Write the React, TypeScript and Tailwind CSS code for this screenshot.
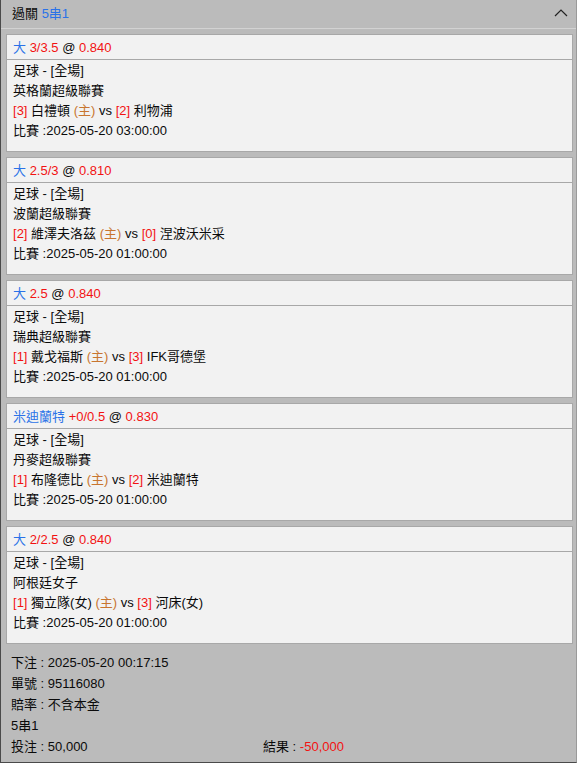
import React from "react";

type Bet = {
  pick: string;
  line: string;
  odds: string;
  league: string;
  homeRank: string;
  home: string;
  awayRank: string;
  away: string;
  time: string;
};

const bets: Bet[] = [
  { pick: "大", line: "3/3.5", odds: "0.840", league: "英格蘭超級聯賽", homeRank: "3", home: "白禮頓", awayRank: "2", away: "利物浦", time: "2025-05-20 03:00:00" },
  { pick: "大", line: "2.5/3", odds: "0.810", league: "波蘭超級聯賽", homeRank: "2", home: "維澤夫洛茲", awayRank: "0", away: "涅波沃米采", time: "2025-05-20 01:00:00" },
  { pick: "大", line: "2.5", odds: "0.840", league: "瑞典超級聯賽", homeRank: "1", home: "戴戈福斯", awayRank: "3", away: "IFK哥德堡", time: "2025-05-20 01:00:00" },
  { pick: "米迪蘭特", line: "+0/0.5", odds: "0.830", league: "丹麥超級聯賽", homeRank: "1", home: "布隆德比", awayRank: "2", away: "米迪蘭特", time: "2025-05-20 01:00:00" },
  { pick: "大", line: "2/2.5", odds: "0.840", league: "阿根廷女子", homeRank: "1", home: "獨立隊(女)", awayRank: "3", away: "河床(女)", time: "2025-05-20 01:00:00" },
];

const BetCard = ({ bet }: { bet: Bet }) => (
  <div className="w-[567px] border border-[#a8a8a8] bg-[#f2f2f2]">
    <div className="h-[25px] leading-[25px] px-[6px] border-b border-[#a8a8a8]">
      <span className="text-[#2a72e8]">{bet.pick}</span>{" "}
      <span className="text-[#f21212]">{bet.line}</span> @{" "}
      <span className="text-[#f21212]">{bet.odds}</span>
    </div>
    <div className="px-[6px] pt-px pb-[10px] leading-[20px]">
      <div>足球 - [全場]</div>
      <div>{bet.league}</div>
      <div>
        <span className="text-[#f21212]">[{bet.homeRank}]</span> {bet.home}{" "}
        <span className="text-[#c8752f]">(主)</span> vs{" "}
        <span className="text-[#f21212]">[{bet.awayRank}]</span> {bet.away}
      </div>
      <div>比賽 :{bet.time}</div>
    </div>
  </div>
);

export default function App() {
  return (
    <div
      className="w-[577px] h-[763px] bg-[#bbbbbb] border-l border-b border-r border-l-[#4a4a4a] border-b-[#4a4a4a] border-r-[#9a9a9a] text-[13px] text-[#0a0a0a] overflow-hidden"
      style={{ fontFamily: '"Liberation Sans", "Noto Sans CJK TC", sans-serif' }}
    >
      <div className="h-[29px] flex items-center justify-between pl-[11px] pr-[8px] border-b border-[#d2d2d2]">
        <div>
          過關 <span className="text-[#2a72e8]">5串1</span>
        </div>
        <svg width="14" height="8" viewBox="0 0 14 8" className="mb-[2px]">
          <path d="M1 7 L7 1 L13 7" fill="none" stroke="#222" strokeWidth="1.2" />
        </svg>
      </div>
      <div className="flex flex-col gap-[5px] pt-[5px] pl-[5px]">
        {bets.map((b, i) => (
          <BetCard key={i} bet={b} />
        ))}
      </div>
      <div className="pl-[10px] pt-[8px] leading-[21px]">
        <div>下注 : 2025-05-20 00:17:15</div>
        <div>單號 : 95116080</div>
        <div>賠率 : 不含本金</div>
        <div>5串1</div>
        <div className="flex">
          <div className="w-[252px]">投注 : 50,000</div>
          <div>
            結果 : <span className="text-[#f21212]">-50,000</span>
          </div>
        </div>
      </div>
    </div>
  );
}
